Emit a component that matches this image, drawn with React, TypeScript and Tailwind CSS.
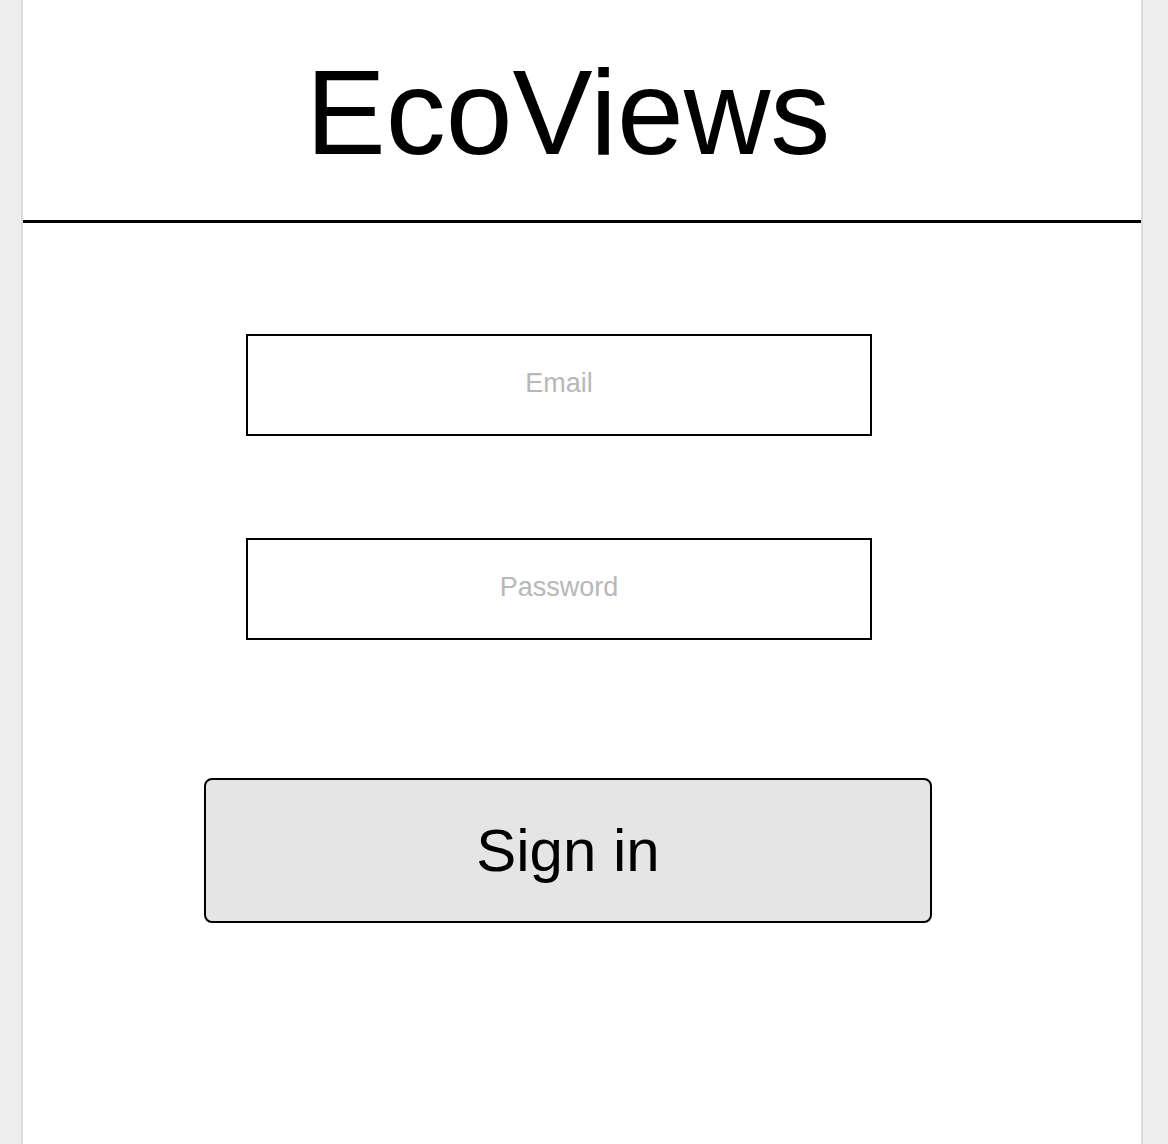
import React from "react";

export default function App() {
  return (
    <div
      className="min-h-screen w-full bg-[#ededed]"
      style={{ fontFamily: '"Liberation Sans", Arial, sans-serif' }}
    >
      <div className="ml-[21px] w-[1122px] min-h-screen bg-white border-x-2 border-[#dcdcdc]">
        <div className="h-[223px] border-b-[3px] border-black pr-[28px]">
          <h1 className="pt-[52px] text-center text-[120px] leading-none font-normal text-black">
            EcoViews
          </h1>
        </div>
        <div className="flex flex-col items-start">
          <input
            type="email"
            placeholder="Email"
            className="mt-[111px] ml-[223px] w-[626px] h-[102px] border-2 border-black bg-white pb-[3px] text-center text-[27px] outline-none placeholder:text-[#b8b8b8]"
          />
          <input
            type="password"
            placeholder="Password"
            className="mt-[102px] ml-[223px] w-[626px] h-[102px] border-2 border-black bg-white pb-[3px] text-center text-[27px] outline-none placeholder:text-[#b8b8b8]"
          />
          <button className="mt-[138px] ml-[181px] w-[728px] h-[145px] rounded-[8px] border-2 border-black bg-[#e5e5e5] text-[60px] text-black">
            Sign in
          </button>
        </div>
      </div>
    </div>
  );
}
